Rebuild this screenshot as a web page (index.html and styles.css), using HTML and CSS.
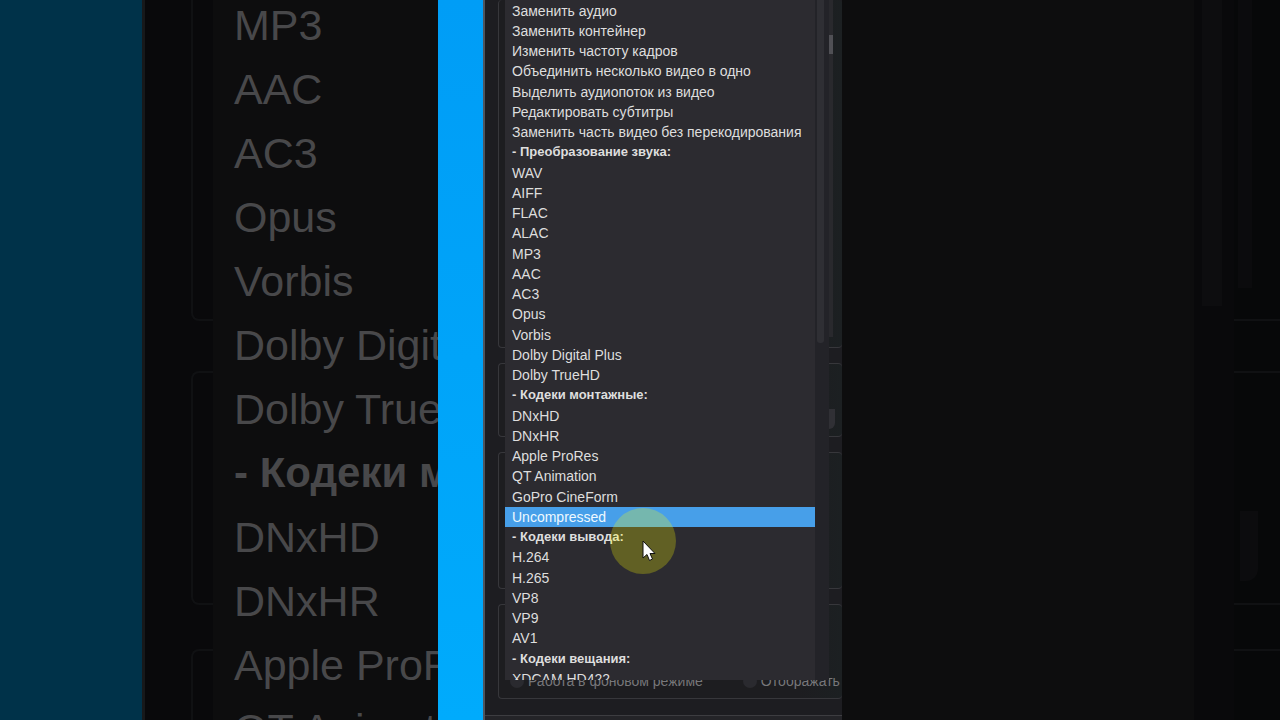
FILE: index.html
```html
<!DOCTYPE html>
<html lang="ru">
<head>
  <meta charset="UTF-8">
  <title>Shutter Encoder</title>
  <link rel="stylesheet" href="styles.css">
</head>
<body>

  <!-- Left backdrop -->
  <div class="side" aria-hidden="true">
    <div class="side-desktop"></div>
    <div class="side-window">
      <div class="side-boxes">
        <div class="side-box first"></div>
        <div class="side-box second"></div>
        <div class="side-box last"></div>
      </div>
      <ul class="side-list">
        <li>MP3</li>
        <li>AAC</li>
        <li>AC3</li>
        <li>Opus</li>
        <li>Vorbis</li>
        <li>Dolby Digital Plus</li>
        <li>Dolby TrueHD</li>
        <li class="title">- Кодеки монтажные:</li>
        <li>DNxHD</li>
        <li>DNxHR</li>
        <li>Apple ProRes</li>
        <li>QT Animation</li>
      </ul>
    </div>
  </div>

  <!-- Program window -->
  <main class="screen">
    <div class="desktop"></div>
    <div class="window">
      <div class="boxes">
        <div class="box files"><div class="file-scroll"><div class="file-thumb"></div></div></div>
        <div class="box function"><div class="knob"></div></div>
        <div class="box output"></div>
        <div class="box options">
          <label><input type="radio" name="mode"> Работа в фоновом режиме</label>
          <label><input type="radio" name="view"> Отображать</label>
        </div>
      </div>
      <div class="statusbar"></div>

      <div class="menu">
        <ul class="menu-list" role="listbox" aria-label="Функции">
          <li role="option">Заменить аудио</li>
          <li role="option">Заменить контейнер</li>
          <li role="option">Изменить частоту кадров</li>
          <li role="option">Объединить несколько видео в одно</li>
          <li role="option">Выделить аудиопоток из видео</li>
          <li role="option">Редактировать субтитры</li>
          <li role="option">Заменить часть видео без перекодирования</li>
          <li class="title">- Преобразование звука:</li>
          <li role="option">WAV</li>
          <li role="option">AIFF</li>
          <li role="option">FLAC</li>
          <li role="option">ALAC</li>
          <li role="option">MP3</li>
          <li role="option">AAC</li>
          <li role="option">AC3</li>
          <li role="option">Opus</li>
          <li role="option">Vorbis</li>
          <li role="option">Dolby Digital Plus</li>
          <li role="option">Dolby TrueHD</li>
          <li class="title">- Кодеки монтажные:</li>
          <li role="option">DNxHD</li>
          <li role="option">DNxHR</li>
          <li role="option">Apple ProRes</li>
          <li role="option">QT Animation</li>
          <li role="option">GoPro CineForm</li>
          <li role="option" class="selected" aria-selected="true">Uncompressed</li>
          <li class="title">- Кодеки вывода:</li>
          <li role="option">H.264</li>
          <li role="option">H.265</li>
          <li role="option">VP8</li>
          <li role="option">VP9</li>
          <li role="option">AV1</li>
          <li class="title">- Кодеки вещания:</li>
          <li role="option">XDCAM HD422</li>
        </ul>
        <div class="menu-scroll"><div class="menu-thumb"></div></div>
      </div>

      <!-- Mouse pointer -->
      <div class="pointer">
        <svg width="14" height="22" viewBox="0 0 14 22">
          <path d="M1 1V18L5 14.5L7.5 20.5L10.5 19L8 13.5H13Z" fill="#fff" stroke="#111" stroke-width="1"/>
        </svg>
      </div>
    </div>
  </main>

  <!-- Right backdrop -->
  <div class="side right" aria-hidden="true">
    <div class="side-menu"></div>
    <div class="side-scroll"><div class="side-thumb"></div></div>
    <div class="side-boxes">
      <div class="side-box first"><div class="side-track"></div></div>
      <div class="side-box second"><div class="side-knob"></div></div>
      <div class="side-box last"></div>
    </div>
  </div>

</body>
</html>
```

FILE: styles.css
```css
* {
  box-sizing: border-box;
}

body {
  margin: 0;
  height: 100vh;
  display: grid;
  grid-template-columns: 438fr 404fr 438fr;
  overflow: hidden;
  background-color: #09090a;
  font-family: "Liberation Sans", Arial, sans-serif;
}

ul {
  list-style: none;
  margin: 0;
  padding: 0;
}

.title {
  font-weight: bold;
}

/* Backdrop */
.side {
  display: flex;
  min-width: 0;
  height: 100vh;
  overflow: hidden;
}

.side-desktop {
  width: 142px;
  flex-shrink: 0;
  background-color: #003249;
}

.side-window {
  flex: 1;
  display: flex;
  min-width: 0;
  padding-left: 46px;
  background-color: #09090b;
  border-left: 3px solid #17191b;
}

.side-boxes {
  width: 22px;
  flex-shrink: 0;
  display: flex;
  flex-direction: column;
}

.side-box {
  border: 2px solid #101113;
  border-right: none;
  border-radius: 8px 0 0 8px;
}

.side-box.first {
  height: 321px;
  border-top: none;
  border-top-left-radius: 0;
  margin-bottom: 50px;
}

.side-box.second {
  height: 234px;
  margin-bottom: 44px;
}

.side-box.last {
  flex: 1;
  border-bottom: none;
  border-bottom-left-radius: 0;
}

.side-list {
  flex: 1;
  min-width: 0;
  height: calc(100vh + 7px);
  margin-top: -7px;
  padding-left: 21px;
  background-color: #0d0d0e;
  color: #48484a;
  font-size: 43px;
  line-height: 64px;
  white-space: nowrap;
}

.side-list .title {
  font-size: 42px;
}

.side-menu {
  flex: 1;
  background-color: #0d0d0e;
}

.side-scroll {
  width: 40px;
  padding-left: 8px;
  background-color: #09090b;
}

.side-thumb {
  width: 20px;
  height: 306px;
  background-color: #0d0d0f;
}

.right .side-boxes {
  width: 46px;
  background-color: #070809;
}

.right .side-box {
  border-left: none;
  border-radius: 0;
}

.side-track {
  width: 14px;
  height: 288px;
  margin-left: 4px;
  background-color: #0b0b0d;
}

.side-knob {
  width: 18px;
  height: 70px;
  margin: 138px 0 0 6px;
  border-radius: 0 0 12px 0;
  background-color: #0c0c0e;
}

/* Program window */
.screen {
  display: flex;
  min-width: 0;
  height: 100vh;
  overflow: hidden;
}

.desktop {
  width: 45px;
  flex-shrink: 0;
  background: linear-gradient(#009df6, #00abfc);
}

.window {
  position: relative;
  flex: 1;
  display: flex;
  flex-direction: column;
  min-width: 0;
  background-color: #1d1d21;
  border-left: 2px solid #4e565e;
}

.boxes {
  flex: 1;
  display: flex;
  flex-direction: column;
  gap: 15px;
  padding: 0 0 16px 13px;
}

.box {
  border: 1px solid #37373b;
  border-right: none;
  border-radius: 4px;
  background: linear-gradient(to right, #1d1d20 300px, #1c2022);
}

.files {
  height: 348px;
  border-top: none;
  padding-left: 328px;
}

.file-scroll {
  width: 6px;
  height: 337px;
  padding-top: 35px;
  background-color: #29292d;
}

.file-thumb {
  height: 19px;
  background-color: #505055;
}

.function {
  height: 74px;
  padding: 45px 0 0 328px;
}

.knob {
  width: 8px;
  height: 20px;
  border-radius: 0 0 6px 0;
  background-color: #303035;
}

.output {
  height: 137px;
}

.options {
  flex: 1;
  display: flex;
  align-items: flex-end;
  gap: 40px;
  padding: 0 0 8px 11px;
  overflow: hidden;
}

.options label {
  display: flex;
  align-items: center;
  gap: 4px;
  flex-shrink: 0;
  color: #77777a;
  font-size: 14px;
  line-height: 18px;
  white-space: nowrap;
}

.options input {
  appearance: none;
  width: 14px;
  height: 14px;
  margin: 0;
  border-radius: 50%;
  background-color: #2a2a2f;
}

.statusbar {
  height: 5px;
  background-color: #242428;
  border-top: 1px solid #3d3d41;
}

/* Drop-down list */
.menu {
  position: absolute;
  top: 0;
  left: 20px;
  width: 324px;
  height: 680px;
  display: flex;
  overflow: hidden;
  background-color: #232328;
}

.menu-list {
  width: 310px;
  padding-top: 1px;
  background-color: #2c2b30;
  color: #dedede;
  font-size: 14px;
  line-height: 20px;
  white-space: nowrap;
}

.menu-list li {
  height: 20px;
  padding-left: 7px;
}

.menu-list li:nth-child(4n) {
  height: 21px;
}

.menu-list .title {
  font-size: 13px;
}

.menu-list .selected {
  background-color: #479fe9;
  color: #eef9ff;
}

.menu-scroll {
  padding-left: 2px;
}

.menu-thumb {
  width: 7px;
  height: 343px;
  border-radius: 0 0 3px 3px;
  background-color: #2f2f34;
}

.pointer {
  position: absolute;
  top: 508px;
  left: 125px;
  width: 66px;
  height: 66px;
  padding: 32px 0 0 32px;
  border-radius: 50%;
  background-color: rgba(255, 255, 0, 0.25);
}

.pointer svg {
  display: block;
}
```
